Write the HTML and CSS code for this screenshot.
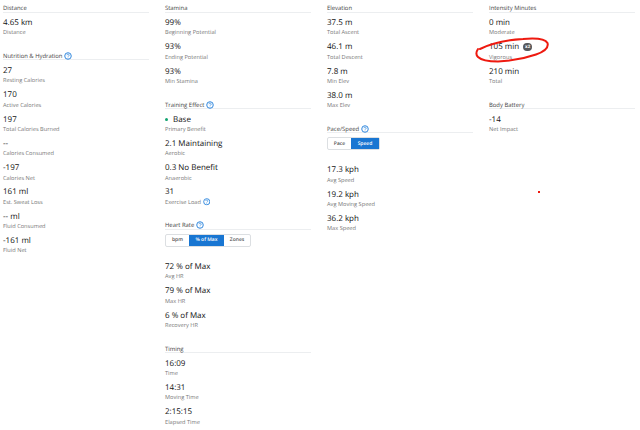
FILE: index.html
```html
<!DOCTYPE html>
<html lang="en">
<head>
<meta charset="utf-8">
<title>Activity Stats</title>
<link rel="stylesheet" href="styles.css">
</head>
<body>
<main class="grid">
  <div class="col">
    <section class="sec">
      <h2 class="title">Distance</h2>
      <div class="stat"><div class="val">4.65 km</div><div class="lab">Distance</div></div>
    </section>
    <section class="sec">
      <h2 class="title">Nutrition &amp; Hydration <svg class="help" viewBox="0 0 10 10"><use href="#q"/></svg></h2>
      <div class="stat"><div class="val">27</div><div class="lab">Resting Calories</div></div>
      <div class="stat"><div class="val">170</div><div class="lab">Active Calories</div></div>
      <div class="stat"><div class="val">197</div><div class="lab">Total Calories Burned</div></div>
      <div class="stat"><div class="val">--</div><div class="lab">Calories Consumed</div></div>
      <div class="stat"><div class="val">-197</div><div class="lab">Calories Net</div></div>
      <div class="stat"><div class="val">161 ml</div><div class="lab">Est. Sweat Loss</div></div>
      <div class="stat"><div class="val">-- ml</div><div class="lab">Fluid Consumed</div></div>
      <div class="stat"><div class="val">-161 ml</div><div class="lab">Fluid Net</div></div>
    </section>
  </div>
  <div class="col">
    <section class="sec">
      <h2 class="title">Stamina</h2>
      <div class="stat"><div class="val">99%</div><div class="lab">Beginning Potential</div></div>
      <div class="stat"><div class="val">93%</div><div class="lab">Ending Potential</div></div>
      <div class="stat"><div class="val">93%</div><div class="lab">Min Stamina</div></div>
    </section>
    <section class="sec">
      <h2 class="title">Training Effect <svg class="help" viewBox="0 0 10 10"><use href="#q"/></svg></h2>
      <div class="stat"><div class="val"><span class="dot"></span>Base</div><div class="lab">Primary Benefit</div></div>
      <div class="stat"><div class="val">2.1 Maintaining</div><div class="lab">Aerobic</div></div>
      <div class="stat"><div class="val">0.3 No Benefit</div><div class="lab">Anaerobic</div></div>
      <div class="stat"><div class="val">31</div><div class="lab">Exercise Load <svg class="help" viewBox="0 0 10 10"><use href="#q"/></svg></div></div>
    </section>
    <section class="sec">
      <h2 class="title">Heart Rate <svg class="help" viewBox="0 0 10 10"><use href="#q"/></svg></h2>
      <div class="toggle"><span class="opt opt-bpm">bpm</span><span class="opt opt-max on">% of Max</span><span class="opt opt-zones">Zones</span></div>
      <div class="stat"><div class="val">72 % of Max</div><div class="lab">Avg HR</div></div>
      <div class="stat"><div class="val">79 % of Max</div><div class="lab">Max HR</div></div>
      <div class="stat"><div class="val">6 % of Max</div><div class="lab">Recovery HR</div></div>
    </section>
    <section class="sec">
      <h2 class="title">Timing</h2>
      <div class="stat"><div class="val">16:09</div><div class="lab">Time</div></div>
      <div class="stat"><div class="val">14:31</div><div class="lab">Moving Time</div></div>
      <div class="stat"><div class="val">2:15:15</div><div class="lab">Elapsed Time</div></div>
    </section>
  </div>
  <div class="col">
    <section class="sec">
      <h2 class="title">Elevation</h2>
      <div class="stat"><div class="val">37.5 m</div><div class="lab">Total Ascent</div></div>
      <div class="stat"><div class="val">46.1 m</div><div class="lab">Total Descent</div></div>
      <div class="stat"><div class="val">7.8 m</div><div class="lab">Min Elev</div></div>
      <div class="stat"><div class="val">38.0 m</div><div class="lab">Max Elev</div></div>
    </section>
    <section class="sec">
      <h2 class="title">Pace/Speed <svg class="help" viewBox="0 0 10 10"><use href="#q"/></svg></h2>
      <div class="toggle"><span class="opt opt-pace">Pace</span><span class="opt opt-speed on">Speed</span></div>
      <div class="stat"><div class="val">17.3 kph</div><div class="lab">Avg Speed</div></div>
      <div class="stat"><div class="val">19.2 kph</div><div class="lab">Avg Moving Speed</div></div>
      <div class="stat"><div class="val">36.2 kph</div><div class="lab">Max Speed</div></div>
    </section>
  </div>
  <div class="col">
    <section class="sec">
      <h2 class="title">Intensity Minutes</h2>
      <div class="stat"><div class="val">0 min</div><div class="lab">Moderate</div></div>
      <div class="stat"><div class="val">105 min <span class="badge">x2</span></div><div class="lab">Vigorous</div></div>
      <div class="stat"><div class="val">210 min</div><div class="lab">Total</div></div>
    </section>
    <section class="sec">
      <h2 class="title">Body Battery</h2>
      <div class="stat"><div class="val">-14</div><div class="lab">Net Impact</div></div>
    </section>
  </div>
</main>
<svg class="defs" width="0" height="0">
  <symbol id="q" viewBox="0 0 10 10">
    <circle cx="5" cy="5" r="4.1" fill="none" stroke="#2a84dc" stroke-width="1.2"/>
    <path d="M3.6 4a1.4 1.3 0 1 1 2.1 1.1c-.5.3-.7.5-.7 1" fill="none" stroke="#2a84dc" stroke-width=".9"/>
    <circle cx="5" cy="7.4" r=".55" fill="#2a84dc"/>
  </symbol>
</svg>
<svg class="mark" viewBox="0 0 640 430">
  <path d="M480 49C490 44 506 40 523 39C534 38 545 38.500 547.500 43C549 48 543 52 536 54.500C526 58 512 61 498 61.500C489 61.500 481 60 478 57C476 55 476 52 478 49" fill="none" stroke="#ee1a10" stroke-width="2" stroke-linecap="round"/>
  <rect x="538" y="191" width="2" height="2" fill="#ee1a10"/>
</svg>
</body>
</html>
```

FILE: styles.css
```css
* { box-sizing: border-box; }
html, body { margin: 0; padding: 0; }
body {
  width: 640px;
  height: 430px;
  overflow: hidden;
  background: #fff;
  color: #222;
  font-family: "Open Sans", "Liberation Sans", sans-serif;
  text-rendering: geometricPrecision;
  position: relative;
}
.grid {
  display: grid;
  grid-template-columns: repeat(4, 146px);
  column-gap: 16px;
  padding: 3px 0 0 3px;
}
.sec { margin-bottom: 11.7px; }
.title {
  margin: 0 0 2.500px;
  height: 9.500px;
  font-size: 5.900px;
  line-height: 10px;
  font-weight: 400;
  color: #444;
  border-bottom: 1px solid #eceef0;
  display: flex;
  align-items: flex-start;
  gap: 2px;
}
.stat { height: 24.3px; padding-top: 2px; }
.val {
  font-size: 8px;
  line-height: 12px;
  color: #111;
  display: flex;
  align-items: center;
  gap: 4px;
}
.lab {
  font-size: 5.650px;
  line-height: 8px;
  margin-top: -.6px;
  color: #777;
  display: flex;
  align-items: center;
  gap: 2px;
}
.help { width: 8px; height: 8px; flex: none; margin-top: 1px; }
.lab .help { width: 7.500px; height: 7.500px; margin-top: 0; }
.dot {
  width: 3px;
  height: 3px;
  border-radius: 50%;
  background: #11a36f;
  margin-right: 1px;
}
.toggle {
  display: inline-flex;
  height: 13px;
  margin: 1.500px 0 12px;
  border: 1px solid #dcdfe2;
  border-radius: 2px;
  font-size: 5px;
  font-weight: 600;
  color: #555;
  vertical-align: top;
}
.opt { display: flex; align-items: center; justify-content: center; }
.opt.on { background: #1976d2; color: #fff; }
.opt-bpm { width: 23px; }
.opt-max { width: 35px; }
.opt-zones { width: 26px; }
.opt-pace { width: 23px; }
.opt-speed { width: 28px; }
.badge {
  width: 9px;
  height: 8px;
  border-radius: 4px;
  background: #55585c;
  color: #fff;
  font-size: 4.500px;
  line-height: 8px;
  text-align: center;
  font-weight: 700;
}
.defs { position: absolute; }
.mark {
  position: absolute;
  left: 0;
  top: 0;
  width: 640px;
  height: 430px;
  pointer-events: none;
}
```
